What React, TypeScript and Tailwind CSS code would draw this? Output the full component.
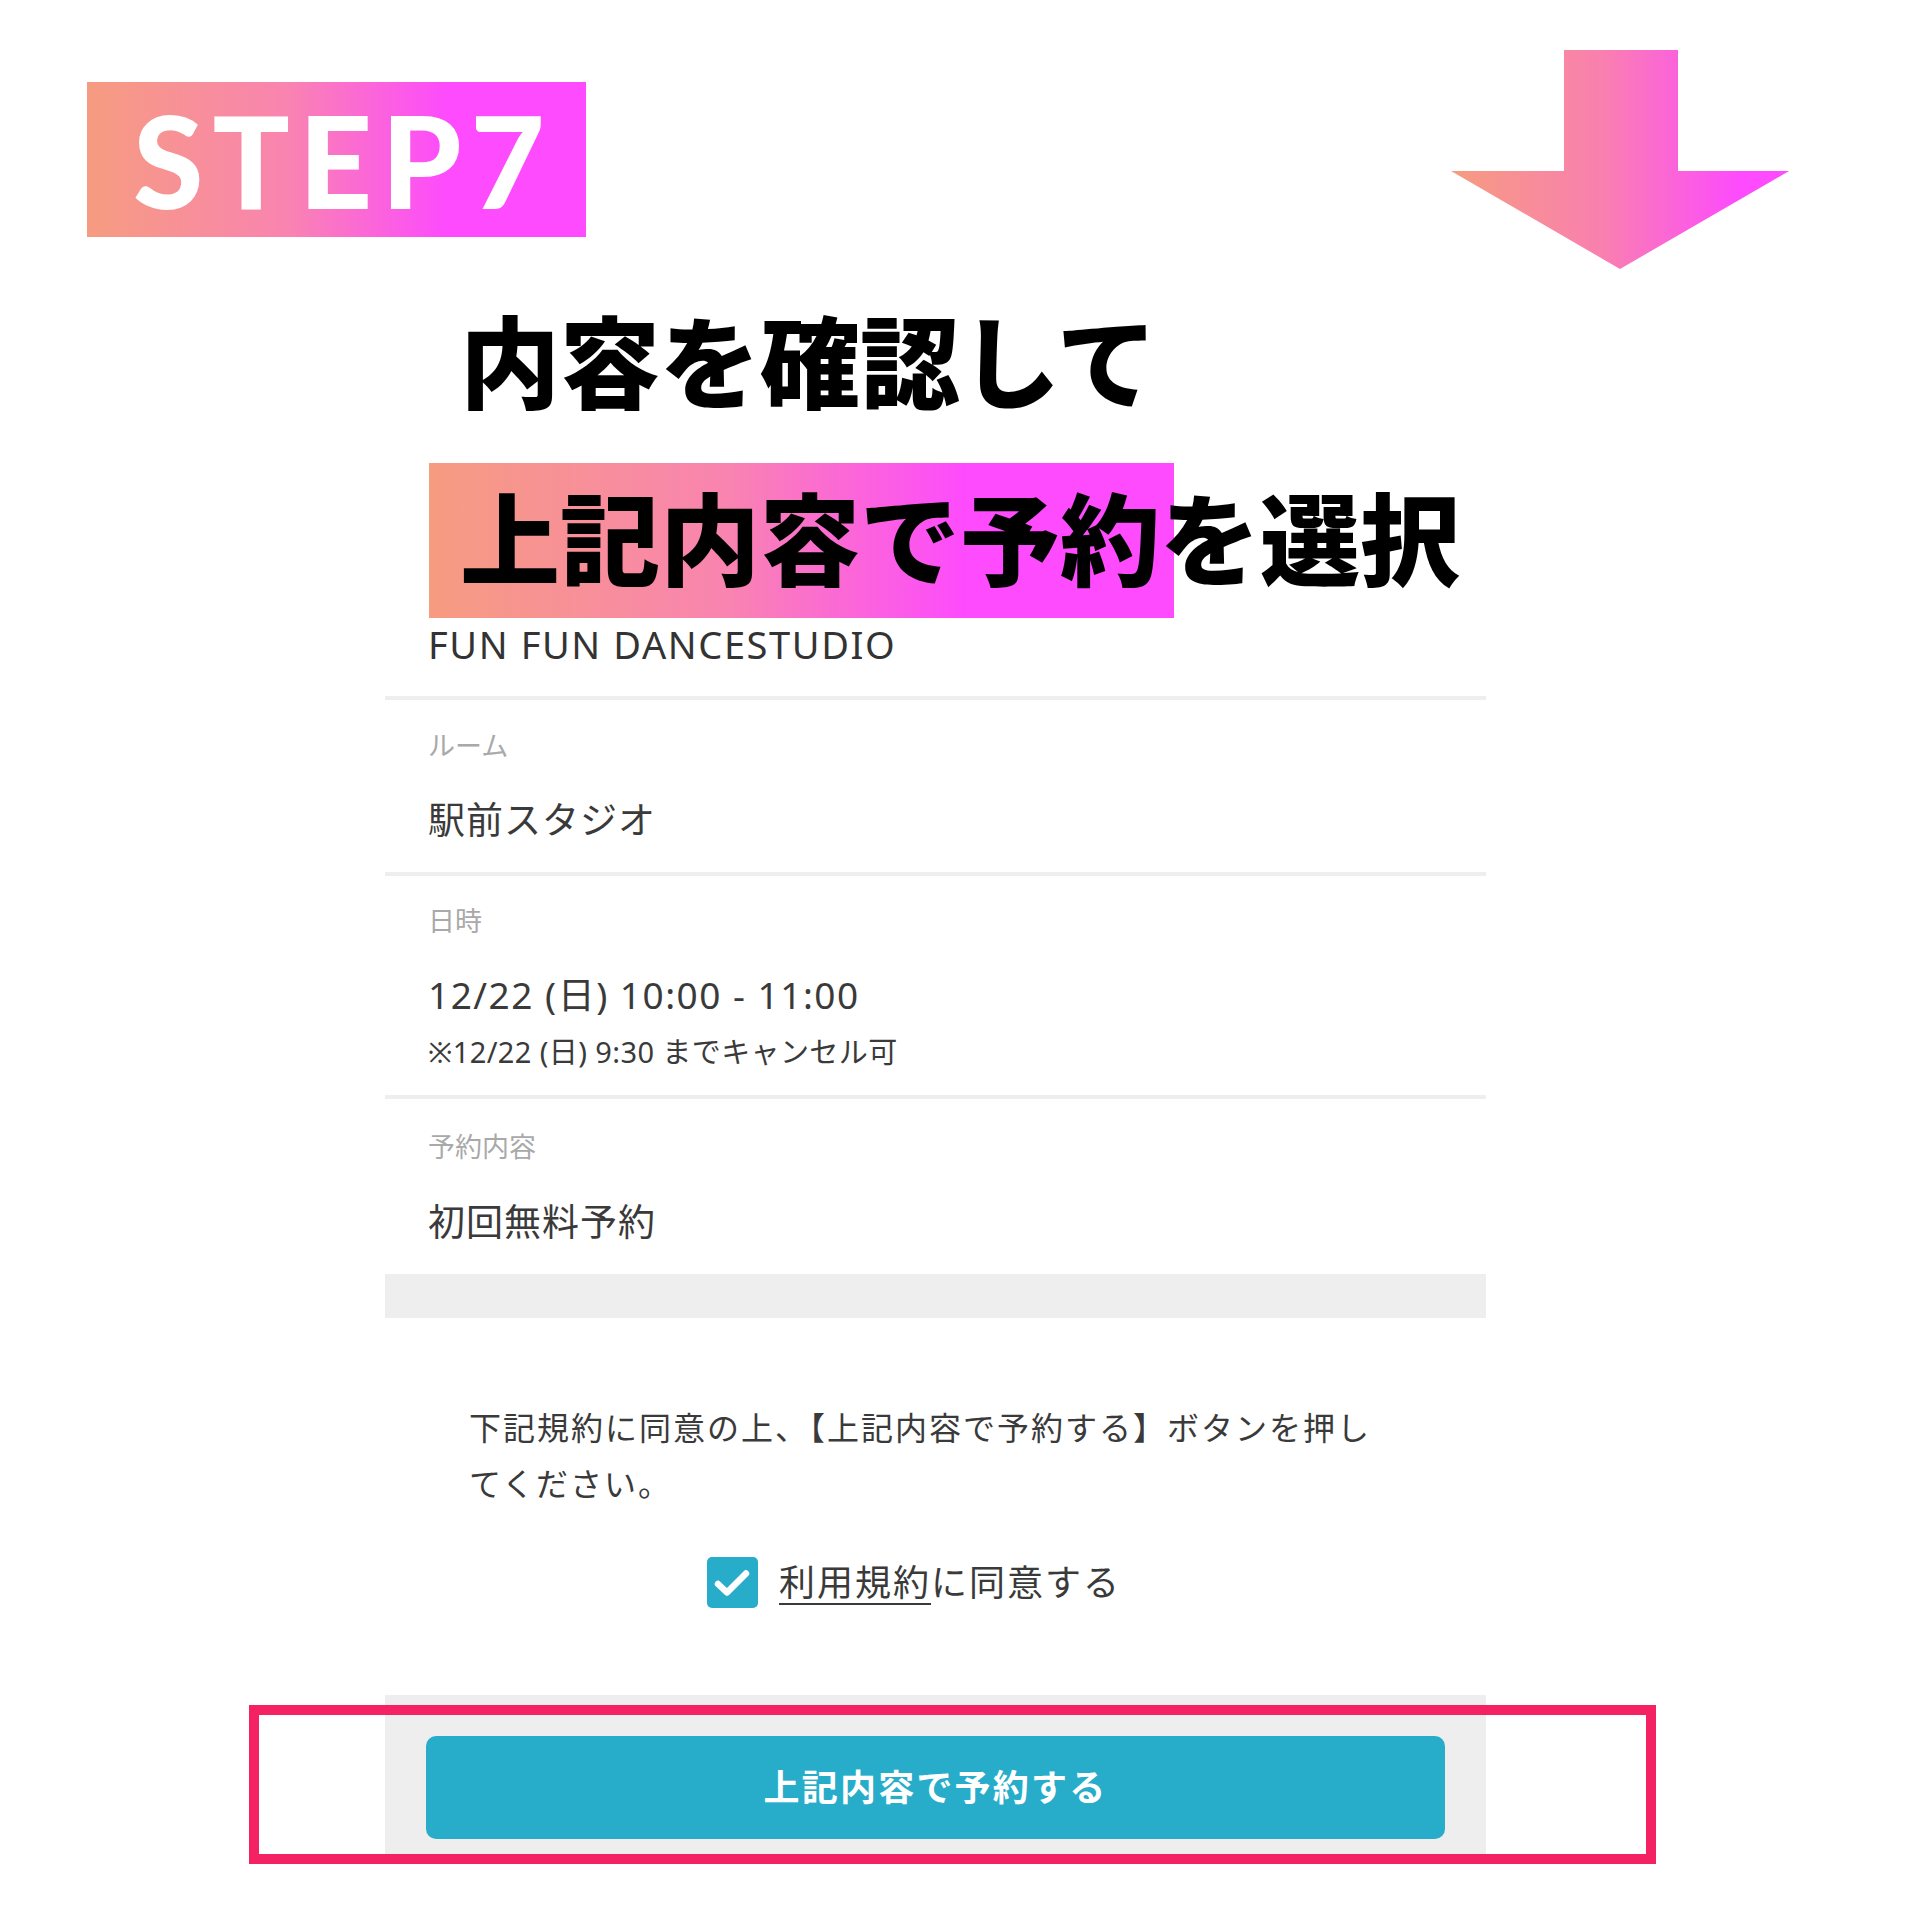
import React from 'react';

const DownArrow: React.FC = () => (
  <svg width="338" height="219" viewBox="0 0 338 219" className="block">
    <defs>
      <linearGradient id="arrowGrad" x1="0" y1="0" x2="338" y2="0" gradientUnits="userSpaceOnUse">
        <stop offset="0" stopColor="#f69c80" />
        <stop offset="0.45" stopColor="#f97fb0" />
        <stop offset="0.85" stopColor="#fd4bfd" />
        <stop offset="1" stopColor="#fd4bfd" />
      </linearGradient>
    </defs>
    <polygon points="113,0 227,0 227,121 338,121 169,219 0,121 113,121" fill="url(#arrowGrad)" />
  </svg>
);

const Divider: React.FC = () => <div className="h-[4px] bg-[#eeeeee]" />;

const App: React.FC = () => {
  return (
    <div className="relative w-[1920px] h-[1920px] bg-white font-['Noto_Sans','Noto_Sans_CJK_JP',sans-serif] text-[#3a3a3a]">
      {/* top row: step badge + arrow */}
      <div className="flex justify-between items-start h-[269px]">
        <div className="ml-[87px] mt-[82px] w-[499px] h-[155px] flex items-center pl-[46px] bg-[linear-gradient(90deg,#f69c80_0%,#f984b0_40%,#fd4bfd_72%,#fd4bfd_100%)]">
          <span className="font-['Lato','Noto_Sans',sans-serif] font-black text-[128px] leading-none tracking-[9px] text-white">
            STEP7
          </span>
        </div>
        <div className="mt-[50px] mr-[131px]">
          <DownArrow />
        </div>
      </div>

      {/* headline */}
      <div className="ml-[429px] mt-[11px] font-['Noto_Sans_CJK_JP',sans-serif] font-black text-[100px] leading-[155px] text-black">
        <div className="pl-[31px]">内容を確認して</div>
        <div className="mt-[28px] h-[155px] whitespace-nowrap leading-[143px]">
          <span className="inline-block align-top h-[155px] pl-[31px] pr-[14px] mr-[-14px] bg-[linear-gradient(90deg,#f69c80_0%,#f984b0_40%,#fd4bfd_72%,#fd4bfd_100%)]">
            上記内容で予約
          </span>
          <span className="relative">を選択</span>
        </div>
      </div>

      {/* reservation card */}
      <div className="ml-[385px] w-[1101px]">
        <div className="h-[78px] pl-[43px]">
          <div className="text-[38px] leading-[53px] tracking-[1.6px] text-[#333333]">FUN FUN DANCESTUDIO</div>
        </div>
        <Divider />

        <div className="h-[172px] pl-[43px] pt-[26px]">
          <div className="text-[27px] leading-[40px] text-[#a9a9a9]">ルーム</div>
          <div className="mt-[32px] text-[37px] leading-[44px] tracking-[1px]">駅前スタジオ</div>
        </div>
        <Divider />

        <div className="h-[219px] pl-[43px] pt-[25px]">
          <div className="text-[27px] leading-[40px] text-[#a9a9a9]">日時</div>
          <div className="mt-[32px] text-[37px] leading-[44px] tracking-[1.5px]">12/22 (日) 10:00 - 11:00</div>
          <div className="mt-[17px] text-[29px] leading-[36px] tracking-[0.4px]">※12/22 (日) 9:30 までキャンセル可</div>
        </div>
        <Divider />

        <div className="h-[175px] pl-[43px] pt-[28px]">
          <div className="text-[27px] leading-[40px] text-[#a9a9a9]">予約内容</div>
          <div className="mt-[33px] text-[37px] leading-[44px] tracking-[1px]">初回無料予約</div>
        </div>
        <div className="h-[44px] bg-[#eeeeee]" />

        <div className="h-[377px] pt-[82px]">
          <p className="pl-[84px] text-[32px] leading-[56px] tracking-[2px]">
            下記規約に同意の上、【上記内容で予約する】ボタンを押し
            <br />
            てください。
          </p>
          <label className="mt-[45px] pl-[322px] flex items-center gap-[21px] cursor-pointer">
            <span className="w-[51px] h-[51px] rounded-[5px] bg-[#27adc9] flex items-center justify-center">
              <svg width="51" height="51" viewBox="0 0 51 51" fill="none">
                <path d="M11 27l9 8.5L39 16.5" stroke="white" strokeWidth="6.5" strokeLinecap="round" strokeLinejoin="round" />
              </svg>
            </span>
            <span className="text-[36px] leading-[51px] tracking-[2px]">
              <span className="underline underline-offset-[7px] decoration-[2px]">利用規約</span>に同意する
            </span>
          </label>
        </div>

        <div className="h-[169px] bg-[#eeeeee] px-[41px] pt-[41px]">
          <button className="w-full h-[103px] rounded-[10px] bg-[#27adca] text-white text-[36px] font-bold tracking-[2.2px] flex items-center justify-center">
            上記内容で予約する
          </button>
        </div>
      </div>

      {/* highlight frame over the button */}
      <div className="absolute left-[249px] top-[1705px] w-[1407px] h-[159px] border-[10px] border-[#f42163] pointer-events-none" />
    </div>
  );
};

export default App;
